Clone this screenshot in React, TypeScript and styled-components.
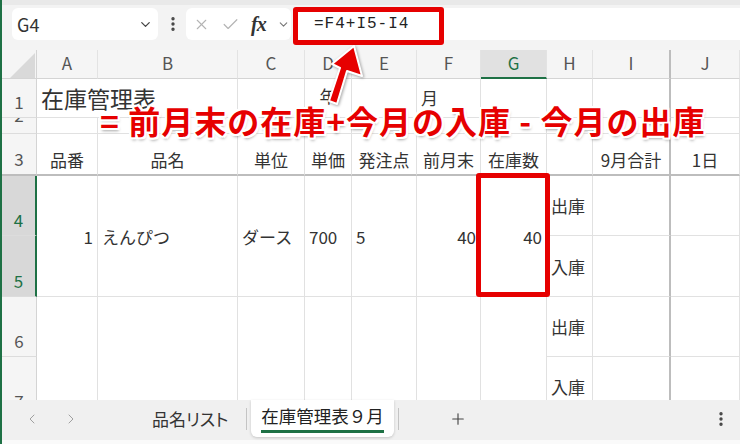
import React from "react";
import styled, { createGlobalStyle } from "styled-components";
import {
  X,
  Check,
  ChevronDown,
  ChevronLeft,
  ChevronRight,
  Plus,
  EllipsisVertical,
} from "lucide-react";

const GlobalStyle = createGlobalStyle`
  * { box-sizing: border-box; }
  body {
    margin: 0;
    background: #fff;
    font-family: "Noto Sans CJK JP", "Noto Sans", sans-serif;
  }
`;

const GREEN = "#1e7145";
const RED = "#e60000";
const GRID = "#e1e1e1";
const FREEZE = "#bdbdbd";

const Frame = styled.div`
  position: relative;
  width: 740px;
  height: 444px;
  overflow: hidden;
  border-left: 2px solid ${GREEN};
  display: flex;
  flex-direction: column;
  background: #fff;
`;

/* ---------- formula bar ---------- */

const FormulaBar = styled.div`
  height: 50px;
  flex: none;
  display: flex;
  align-items: flex-start;
  padding-top: 8px;
  background: #f3f3f3;
  box-shadow: inset 0 5px 0 #e9e9e9;
`;

const NameBox = styled.div`
  margin-left: 10px;
  width: 146px;
  height: 32px;
  display: flex;
  align-items: center;
  justify-content: space-between;
  padding: 0 5px 0 5px;
  background: #fff;
  border-radius: 6px;
  font-size: 18px;
  color: #333;
  svg { color: #444; }
`;

const BarDots = styled.div`
  width: 24px;
  height: 32px;
  margin-left: 3px;
  display: flex;
  align-items: center;
  justify-content: center;
  color: #444;
`;

const Controls = styled.div`
  margin-left: 1px;
  width: 105px;
  height: 32px;
  display: flex;
  align-items: center;
  gap: 11px;
  padding-left: 7px;
  background: #fff;
  border-radius: 6px;
`;

const Fx = styled.span`
  font-family: "Liberation Serif", serif;
  font-style: italic;
  font-weight: bold;
  font-size: 20px;
  color: #333;
  letter-spacing: -1px;
`;

const FormulaInput = styled.div`
  margin-left: 3px;
  flex: 1;
  height: 32px;
  display: flex;
  align-items: center;
  padding-left: 20px;
  background: #fff;
  border-radius: 6px 0 0 6px;
  font-family: "Liberation Mono", monospace;
  font-size: 16px;
  letter-spacing: 1px;
  color: #222;
`;

/* ---------- sheet ---------- */

const Sheet = styled.div`
  flex: none;
  height: 350px;
  overflow: hidden;
  display: grid;
  grid-template-columns: 35px 61px 140px 67px 47px 65px 64px 66px 46px 78px 69px;
  grid-template-rows: 29px 39px 16px 42px 60px 61px 60px 60px;
  font-size: 17px;
  line-height: 17px;
  color: #333;
`;

const Corner = styled.div`
  position: relative;
  background: #f5f5f5;
  border-right: 1px solid #d4d4d4;
  border-bottom: 1px solid #d4d4d4;
  &::after {
    content: "";
    position: absolute;
    left: 8px;
    top: 3px;
    width: 25px;
    height: 25px;
    background: #d9d9d9;
    clip-path: polygon(100% 0, 100% 100%, 0 100%);
  }
`;

const ColHead = styled.div<{ $active?: boolean; $freeze?: boolean }>`
  display: flex;
  align-items: center;
  justify-content: center;
  padding-bottom: 3px;
  background: ${(p) => (p.$active ? "#e1e1e1" : "#f5f5f5")};
  color: ${(p) => (p.$active ? GREEN : "#555")};
  border-right: ${(p) => (p.$freeze ? `2px solid ${FREEZE}` : "1px solid #e3e3e3")};
  border-bottom: ${(p) => (p.$active ? `2px solid ${GREEN}` : "1px solid #d4d4d4")};
`;

const RowHead = styled.div<{ $active?: boolean; $freeze?: boolean }>`
  display: flex;
  align-items: flex-end;
  justify-content: center;
  padding-bottom: 7px;
  overflow: hidden;
  background: ${(p) => (p.$active ? "#d8d8d8" : "#f5f5f5")};
  color: ${(p) => (p.$active ? GREEN : "#555")};
  border-right: ${(p) => (p.$active ? `2px solid ${GREEN}` : "1px solid #d4d4d4")};
  border-bottom: ${(p) => (p.$freeze ? `2px solid ${FREEZE}` : "1px solid #dcdcdc")};
`;

const ClippedLabel = styled.span`
  align-self: flex-start;
  margin-top: -12px;
`;

type Align = "left" | "center" | "right";

const Cell = styled.div<{
  $h?: Align;
  $mid?: boolean;
  $span?: number;
  $rows?: number;
  $freezeR?: boolean;
  $freezeB?: boolean;
  $pb?: number;
  $size?: number;
}>`
  display: flex;
  white-space: nowrap;
  justify-content: ${(p) =>
    p.$h === "right" ? "flex-end" : p.$h === "center" ? "center" : "flex-start"};
  align-items: ${(p) => (p.$mid ? "center" : "flex-end")};
  padding: 0 4px ${(p) => (p.$mid ? 0 : p.$pb ?? 6)}px;
  grid-column: span ${(p) => p.$span ?? 1};
  grid-row: span ${(p) => p.$rows ?? 1};
  font-size: ${(p) => p.$size ?? 17}px;
  line-height: ${(p) => p.$size ?? 17}px;
  border-right: ${(p) => (p.$freezeR ? `2px solid ${FREEZE}` : `1px solid ${GRID}`)};
  border-bottom: ${(p) => (p.$freezeB ? `2px solid ${FREEZE}` : `1px solid ${GRID}`)};
`;

/* ---------- tab bar ---------- */

const TabBar = styled.div`
  flex: 1;
  display: flex;
  align-items: flex-start;
  background: #f0f0f0;
  border-bottom: 4px solid #fafafa;
  font-size: 17px;
  color: #333;
`;

const NavGroup = styled.div`
  width: 136px;
  height: 37px;
  display: flex;
  align-items: center;
  gap: 23px;
  padding-left: 22px;
  color: #a0a0a0;
`;

const SheetTab = styled.div`
  height: 37px;
  display: flex;
  align-items: center;
  padding: 0 14px;
  font-feature-settings: "palt";
`;

const TabDivider = styled.div`
  width: 1px;
  height: 22px;
  margin: 8px 4px 0;
  background: #c4c4c4;
`;

const ActiveTab = styled.div`
  height: 37px;
  display: flex;
  align-items: center;
  padding: 0 10px;
  background: #fff;
  border-radius: 0 0 6px 6px;
  box-shadow: 0 1px 3px rgba(0, 0, 0, 0.18);
  color: #222;
  font-size: 17.5px;
`;

const ActiveLabel = styled.span`
  line-height: 22px;
  padding-bottom: 3px;
  border-bottom: 3px solid ${GREEN};
`;

const AddSheet = styled.div`
  height: 37px;
  display: flex;
  align-items: center;
  margin-left: 46px;
  color: #444;
`;

const TabMore = styled.div`
  height: 37px;
  display: flex;
  align-items: center;
  margin-left: auto;
  margin-right: 10px;
  color: #444;
`;

/* ---------- overlays ---------- */

const Highlight = styled.div<{ $l: number; $t: number; $w: number; $h: number }>`
  position: absolute;
  left: ${(p) => p.$l}px;
  top: ${(p) => p.$t}px;
  width: ${(p) => p.$w}px;
  height: ${(p) => p.$h}px;
  border: 5px solid ${RED};
  border-radius: 3px;
`;

const Annotation = styled.div`
  position: absolute;
  left: 98px;
  top: 104px;
  font-size: 32px;
  line-height: 32px;
  font-weight: bold;
  letter-spacing: 1px;
  white-space: nowrap;
  color: ${RED};
  text-shadow:
    2px 0 0 #fff, -2px 0 0 #fff, 0 2px 0 #fff, 0 -2px 0 #fff,
    2px 2px 0 #fff, -2px -2px 0 #fff, 2px -2px 0 #fff, -2px 2px 0 #fff,
    1px 3px 3px rgba(0, 0, 0, 0.35);
`;

const Arrow = styled.svg`
  position: absolute;
  left: 318px;
  top: 38px;
  overflow: visible;
  filter: drop-shadow(1px 1px 1.5px rgba(0, 0, 0, 0.35));
`;

const cols = ["A", "B", "C", "D", "E", "F", "G", "H", "I", "J"];
const headers = ["品番", "品名", "単位", "単価", "発注点", "前月末", "在庫数", "", "9月合計", "1日"];

export default function App() {
  return (
    <Frame>
      <GlobalStyle />
      <FormulaBar>
        <NameBox>
          G4
          <ChevronDown size={15} strokeWidth={2} />
        </NameBox>
        <BarDots>
          <EllipsisVertical size={18} strokeWidth={2.5} />
        </BarDots>
        <Controls>
          <X size={17} color="#b4b4b4" strokeWidth={1.5} />
          <Check size={19} color="#b4b4b4" strokeWidth={1.5} />
          <Fx>fx</Fx>
          <ChevronDown size={13} color="#777" strokeWidth={2} />
        </Controls>
        <FormulaInput>=F4+I5-I4</FormulaInput>
      </FormulaBar>

      <Sheet>
        <Corner />
        {cols.map((c) => (
          <ColHead key={c} $active={c === "G"} $freeze={c === "I"}>
            {c}
          </ColHead>
        ))}

        {/* row 1 */}
        <RowHead>1</RowHead>
        <Cell $span={2} $size={23} $pb={7}>
          在庫管理表
        </Cell>
        <Cell />
        <Cell $h="center" $pb={13}>年</Cell>
        <Cell />
        <Cell $pb={11}>月</Cell>
        <Cell />
        <Cell />
        <Cell $freezeR />
        <Cell />

        {/* row 2 */}
        <RowHead>
          <ClippedLabel>2</ClippedLabel>
        </RowHead>
        {cols.map((c) => (
          <Cell key={c} $freezeR={c === "I"} />
        ))}

        {/* row 3 */}
        <RowHead $freeze>3</RowHead>
        {headers.map((h, i) => (
          <Cell key={i} $h="center" $freezeB $freezeR={cols[i] === "I"}>
            {h}
          </Cell>
        ))}

        {/* rows 4-5 */}
        <RowHead $active>4</RowHead>
        <Cell $rows={2} $mid $h="right">1</Cell>
        <Cell $rows={2} $mid>えんぴつ</Cell>
        <Cell $rows={2} $mid>ダース</Cell>
        <Cell $rows={2} $mid>700</Cell>
        <Cell $rows={2} $mid>5</Cell>
        <Cell $rows={2} $mid $h="right">40</Cell>
        <Cell $rows={2} $mid $h="right">40</Cell>
        <Cell $mid>出庫</Cell>
        <Cell $freezeR />
        <Cell />
        <RowHead $active>5</RowHead>
        <Cell $mid>入庫</Cell>
        <Cell $freezeR />
        <Cell />

        {/* rows 6-7 */}
        <RowHead>6</RowHead>
        {cols.slice(0, 7).map((c) => (
          <Cell key={c} $rows={2} />
        ))}
        <Cell $mid>出庫</Cell>
        <Cell $freezeR />
        <Cell />
        <RowHead>7</RowHead>
        <Cell $mid>入庫</Cell>
        <Cell $freezeR />
        <Cell />
      </Sheet>

      <TabBar>
        <NavGroup>
          <ChevronLeft size={16} strokeWidth={1.5} />
          <ChevronRight size={16} strokeWidth={1.5} />
        </NavGroup>
        <SheetTab>品名リスト</SheetTab>
        <TabDivider />
        <ActiveTab>
          <ActiveLabel>在庫管理表９月</ActiveLabel>
        </ActiveTab>
        <TabDivider />
        <AddSheet>
          <Plus size={18} strokeWidth={1.5} />
        </AddSheet>
        <TabMore>
          <EllipsisVertical size={18} strokeWidth={2.5} />
        </TabMore>
      </TabBar>

      <Highlight $l={291} $t={7} $w={151} $h={38} />
      <Highlight $l={474} $t={173} $w={74} $h={124} />
      <Arrow width="50" height="72" viewBox="0 0 50 72">
        <polygon
          points="34,8 42,38 27,33 17,66 9,63 20,30 12,26"
          fill={RED}
          stroke="#fff"
          strokeWidth="2"
          strokeLinejoin="round"
        />
      </Arrow>
      <Annotation>= 前月末の在庫+今月の入庫 - 今月の出庫</Annotation>
    </Frame>
  );
}
